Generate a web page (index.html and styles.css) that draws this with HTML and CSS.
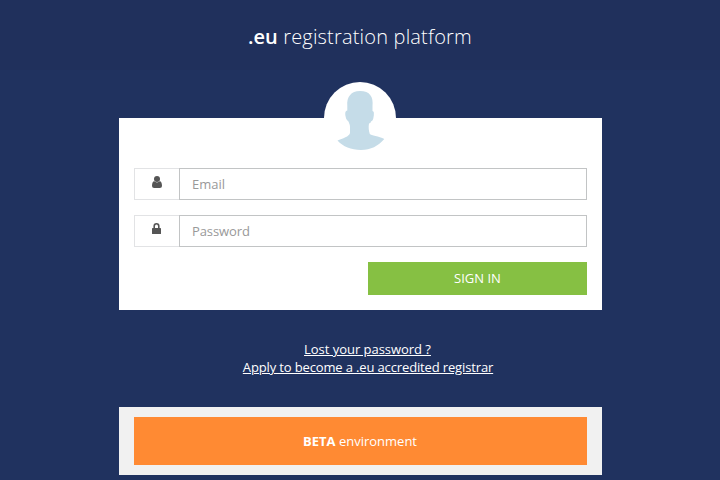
FILE: index.html
```html
<!DOCTYPE html>
<html lang="en">
<head>
<meta charset="utf-8">
<title>.eu registration platform</title>
<link rel="stylesheet" href="styles.css">
</head>
<body>
<header class="header"><h1><b>.eu</b> registration platform</h1></header>
<main class="content">
  <form class="login">
    <div class="avatar">
      <svg viewBox="0 0 72 72" width="72" height="72"><path d="M36 9C27 9 22.500 15 23.300 24V28.500C21 29 21 31.500 21.600 34.500C22 37.500 23.500 38.500 24.500 39.500C25.300 41.500 26 43 26 45V51C25.500 54.500 18.500 56.500 13.500 58.500C19 64.500 27 68 37 68C47 68 54 64 60.300 57C55 54 47 53.500 45.800 52C44.800 49 44.300 45 45 41.500C46 41 46.500 41 47 39.500C49.500 38.500 49.300 36 49.800 33.500C50 30.500 50 29.500 48.500 29V24C49.500 15 46 9 36 9Z"/></svg>
    </div>
    <div class="field">
      <span class="addon"><svg width="10" height="12" viewBox="0 0 10 12"><path d="M2.300 5.300C.7 5.300 .2 7 0 9.500C0 11.200 .8 12 2.200 12H7.800C9.200 12 10 11.200 10 9.500C9.800 7 9.300 5.300 7.700 5.300C6 6.800 4 6.800 2.300 5.300Z"/><circle cx="5" cy="3" r="3"/></svg></span>
      <input type="text" placeholder="Email">
    </div>
    <div class="field">
      <span class="addon"><svg width="9" height="11" viewBox="0 0 9 11"><rect y="5" width="9" height="6" rx=".6"/><path class="shackle" d="M2.200 5.500V3.300a2.300 2.500 0 0 1 4.600 0V5.500"/></svg></span>
      <input class="password" type="password" placeholder="Password">
    </div>
    <button type="button">SIGN IN</button>
  </form>
  <nav class="links">
    <a class="lost" href="#">Lost your password ?</a>
    <a class="apply" href="#">Apply to become a .eu accredited registrar</a>
  </nav>
  <div class="notice"><div class="environment"><span><b>BETA</b> environment</span></div></div>
</main>
</body>
</html>
```
FILE: styles.css
```css
* { box-sizing: border-box; }
body {
  margin: 0;
  height: 480px;
  overflow: hidden;
  background: #20325f;
  color: #fff;
  font: 13px/18px "Open Sans", sans-serif;
}
.header { height: 70px; padding-top: 22px; background: #20305c; }
h1 { margin: 0; text-align: center; font-size: 20px; line-height: 30px; font-weight: 300; letter-spacing: .18px; }
h1 b { font-weight: 600; letter-spacing: 0; }
.content { width: 483px; margin: 48px 0 0 119px; }
.login { height: 192px; padding: 0 15px; background: #fff; display: flex; flex-direction: column; }
.avatar { width: 72px; height: 72px; margin: -36px auto 14px 190px; border-radius: 50%; background: #fff; }
.avatar svg { display: block; fill: #c5dce8; }
.field { display: flex; height: 32px; margin-bottom: 15px; }
.addon { width: 45px; border: 1px solid #e2e3e5; border-right: 0; padding: 7px 0 0 17px; }
.addon svg { display: block; fill: #555; }
.addon .shackle { fill: none; stroke: #555; stroke-width: 1.6; }
input {
  flex: 1;
  min-width: 0;
  padding: 0 12px;
  border: 1px solid #c2c4c5;
  border-radius: 0;
  background: #fff;
  font: inherit;
  outline: 0;
}
.password { letter-spacing: -.1px; }
input::placeholder { color: #999; opacity: 1; }
button { align-self: flex-end; width: 219px; height: 33px; padding: 0 0 2px; border: 0; background: #86c043; color: #fff; font: inherit; }
.links { height: 97px; padding: 30px 0 0 15px; display: flex; flex-direction: column; align-items: center; }
.links a { color: #fff; }
.lost { letter-spacing: -.03px; margin-right: 1px; }
.apply { letter-spacing: -.14px; }
.notice { height: 68px; padding: 10px 15px; background: #f1f1f1; }
.environment { height: 48px; padding-right: 1px; display: flex; align-items: center; justify-content: center; background: #ff8a33; }
```
